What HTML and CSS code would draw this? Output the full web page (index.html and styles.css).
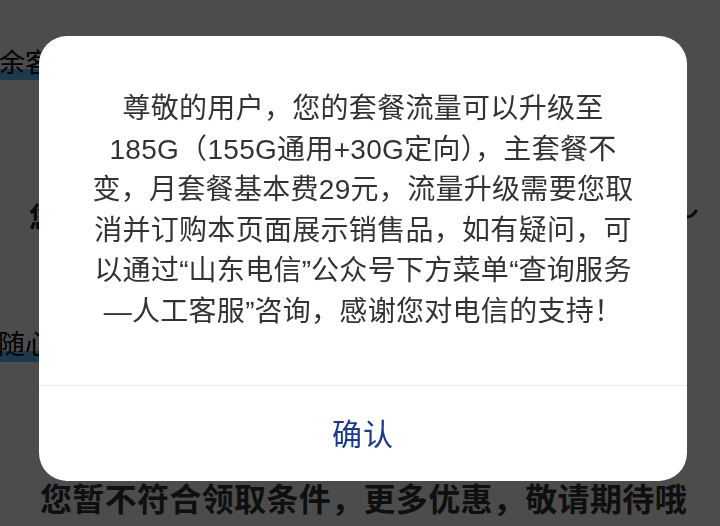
FILE: index.html
```html
<!DOCTYPE html>
<html lang="zh-CN">
<head>
<meta charset="utf-8">
<title>流量升级提示</title>
<link rel="stylesheet" href="styles.css">
</head>
<body>
<div class="page">
  <div class="row r1"><span class="hl">余客服</span></div>
  <div class="row r2">
    <span class="strong">您可</span>
    <svg class="chev" width="24" height="20" viewBox="0 0 24 20"><path d="M4 6 Q13 19 21 7" fill="none" stroke="#222" stroke-width="3" stroke-linecap="round"/></svg>
  </div>
  <div class="row r3"><span class="hl">随心选</span></div>
  <div class="row r4">您暂不符合领取条件，更多优惠，敬请期待哦</div>
</div>
<div class="mask"></div>
<div class="dialog">
  <div class="msg">尊敬的用户，您的套餐流量可以升级至<br>185G（155G通用+30G定向），主套餐不<br>变，月套餐基本费29元，流量升级需要您取<br>消并订购本页面展示销售品，如有疑问，可<br>以通过<span class="q">“</span>山东电信<span class="q">”</span>公众号下方菜单<span class="q">“</span>查询服务<br>—人工客服<span class="q">”</span>咨询，感谢您对电信的支持！</div>
  <div class="actions"><span class="ok">确认</span></div>
</div>
</body>
</html>
```
FILE: styles.css
```css
html, body {
  margin: 0;
  padding: 0;
  width: 720px;
  height: 526px;
  overflow: hidden;
  background: #ffffff;
}
body {
  font-family: "Liberation Sans", "Noto Sans CJK SC", sans-serif;
  color: #333;
}
.page {
  display: flex;
  flex-direction: column;
  padding-top: 45px;
}
.row {
  display: flex;
  align-items: center;
  white-space: nowrap;
}
.r1 {
  height: 36px;
  margin-left: -1px;
  font-size: 26px;
  color: #000;
}
.hl {
  display: inline-block;
  height: 36px;
  line-height: 36px;
  padding-right: 20px;
  background: linear-gradient(to bottom, transparent 24px, #66bfff 24px, #66bfff 35px, transparent 35px);
}
.r2 {
  height: 40px;
  margin-top: 115px;
  padding-left: 29px;
  font-size: 28px;
  font-weight: bold;
  color: #222;
}
.chev {
  margin-left: auto;
  margin-right: 21px;
  margin-top: -4px;
}
.r3 {
  height: 36px;
  margin-top: 91px;
  margin-left: -2px;
  font-size: 27px;
  color: #000;
}
.r4 {
  height: 44px;
  margin-top: 112px;
  padding-left: 40px;
  font-size: 32px;
  letter-spacing: 0.35px;
  font-weight: bold;
  color: #333;
}
.mask {
  position: fixed;
  inset: 0;
  background: rgba(0, 0, 0, 0.7);
}
.dialog {
  position: absolute;
  left: 39px;
  top: 36px;
  width: 648px;
  height: 445px;
  border-radius: 28px;
  background: #ffffff;
  display: flex;
  flex-direction: column;
  overflow: hidden;
}
.msg {
  padding: 53px 0 52px;
  text-align: center;
  font-size: 28px;
  line-height: 40.6px;
  letter-spacing: 0.3px;
  color: #333;
  white-space: nowrap;
}
.q {
  font-family: "Liberation Sans", sans-serif;
  letter-spacing: 0;
}
.actions {
  flex: 1;
  border-top: 1px solid #ececec;
  display: flex;
  align-items: center;
  justify-content: center;
}
.ok {
  font-size: 30px;
  color: #1b3a8c;
  letter-spacing: 1px;
  margin-top: -2px;
}
```
